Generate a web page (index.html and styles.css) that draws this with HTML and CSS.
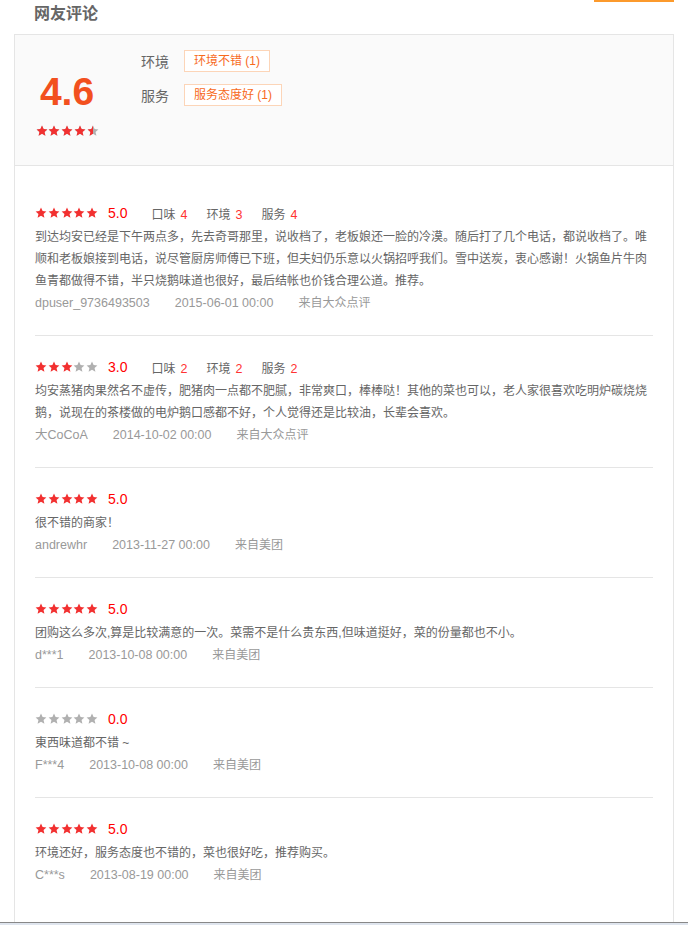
FILE: index.html
```html
<!DOCTYPE html>
<html lang="zh-CN">
<head>
<meta charset="utf-8">
<title>网友评论</title>
<link rel="stylesheet" href="styles.css">
</head>
<body>
<svg width="0" height="0" class="defs" aria-hidden="true">
  <defs>
    <path id="star" d="M12 1.2l3.2 7 7.6.8-5.7 5.1 1.7 7.5L12 17.7l-6.8 3.9 1.7-7.5L1.2 9l7.6-.8z"/>
  </defs>
</svg>
<div class="page">
  <div class="header">
    <h2 class="title">网友评论</h2>
    <div class="tab-line"></div>
  </div>
  <div class="box">
    <div class="summary">
      <div class="score-col">
        <div class="score">4.6</div>
        <div class="stars-wrap">
          <div class="stars gray">
            <svg viewBox="0 0 24 24"><use href="#star"/></svg><svg viewBox="0 0 24 24"><use href="#star"/></svg><svg viewBox="0 0 24 24"><use href="#star"/></svg><svg viewBox="0 0 24 24"><use href="#star"/></svg><svg viewBox="0 0 24 24"><use href="#star"/></svg>
          </div>
          <div class="stars red overlay" style="width:57px">
            <svg viewBox="0 0 24 24"><use href="#star"/></svg><svg viewBox="0 0 24 24"><use href="#star"/></svg><svg viewBox="0 0 24 24"><use href="#star"/></svg><svg viewBox="0 0 24 24"><use href="#star"/></svg><svg viewBox="0 0 24 24"><use href="#star"/></svg>
          </div>
        </div>
      </div>
      <div class="tags-col">
        <div class="tag-row"><span class="tag-label">环境</span><span class="tag">环境不错 (1)</span></div>
        <div class="tag-row"><span class="tag-label">服务</span><span class="tag">服务态度好 (1)</span></div>
      </div>
    </div>

    <div class="list">
      <div class="review">
        <div class="rhead">
          <div class="stars red"><svg viewBox="0 0 24 24"><use href="#star"/></svg><svg viewBox="0 0 24 24"><use href="#star"/></svg><svg viewBox="0 0 24 24"><use href="#star"/></svg><svg viewBox="0 0 24 24"><use href="#star"/></svg><svg viewBox="0 0 24 24"><use href="#star"/></svg></div>
          <span class="rscore">5.0</span>
          <span class="sub">口味<b>4</b></span><span class="sub">环境<b>3</b></span><span class="sub">服务<b>4</b></span>
        </div>
        <p class="rtext">到达均安已经是下午两点多，先去奇哥那里，说收档了，老板娘还一脸的冷漠。随后打了几个电话，都说收档了。唯顺和老板娘接到电话，说尽管厨房师傅已下班，但夫妇仍乐意以火锅招呼我们。雪中送炭，衷心感谢！火锅鱼片牛肉鱼青都做得不错，半只烧鹅味道也很好，最后结帐也价钱合理公道。推荐。</p>
        <div class="meta"><span class="user">dpuser_9736493503</span><span class="date">2015-06-01 00:00</span><span class="src">来自大众点评</span></div>
      </div>

      <div class="review">
        <div class="rhead">
          <div class="stars"><svg class="on" viewBox="0 0 24 24"><use href="#star"/></svg><svg class="on" viewBox="0 0 24 24"><use href="#star"/></svg><svg class="on" viewBox="0 0 24 24"><use href="#star"/></svg><svg class="off" viewBox="0 0 24 24"><use href="#star"/></svg><svg class="off" viewBox="0 0 24 24"><use href="#star"/></svg></div>
          <span class="rscore">3.0</span>
          <span class="sub">口味<b>2</b></span><span class="sub">环境<b>2</b></span><span class="sub">服务<b>2</b></span>
        </div>
        <p class="rtext">均安蒸猪肉果然名不虚传，肥猪肉一点都不肥腻，非常爽口，棒棒哒！其他的菜也可以，老人家很喜欢吃明炉碳烧烧鹅，说现在的茶楼做的电炉鹅口感都不好，个人觉得还是比较油，长辈会喜欢。</p>
        <div class="meta"><span class="user">大CoCoA</span><span class="date">2014-10-02 00:00</span><span class="src">来自大众点评</span></div>
      </div>

      <div class="review">
        <div class="rhead">
          <div class="stars red"><svg viewBox="0 0 24 24"><use href="#star"/></svg><svg viewBox="0 0 24 24"><use href="#star"/></svg><svg viewBox="0 0 24 24"><use href="#star"/></svg><svg viewBox="0 0 24 24"><use href="#star"/></svg><svg viewBox="0 0 24 24"><use href="#star"/></svg></div>
          <span class="rscore">5.0</span>
        </div>
        <p class="rtext">很不错的商家！</p>
        <div class="meta"><span class="user">andrewhr</span><span class="date">2013-11-27 00:00</span><span class="src">来自美团</span></div>
      </div>

      <div class="review">
        <div class="rhead">
          <div class="stars red"><svg viewBox="0 0 24 24"><use href="#star"/></svg><svg viewBox="0 0 24 24"><use href="#star"/></svg><svg viewBox="0 0 24 24"><use href="#star"/></svg><svg viewBox="0 0 24 24"><use href="#star"/></svg><svg viewBox="0 0 24 24"><use href="#star"/></svg></div>
          <span class="rscore">5.0</span>
        </div>
        <p class="rtext">团购这么多次,算是比较满意的一次。菜需不是什么贵东西,但味道挺好，菜的份量都也不小。</p>
        <div class="meta"><span class="user">d***1</span><span class="date">2013-10-08 00:00</span><span class="src">来自美团</span></div>
      </div>

      <div class="review">
        <div class="rhead">
          <div class="stars gray"><svg viewBox="0 0 24 24"><use href="#star"/></svg><svg viewBox="0 0 24 24"><use href="#star"/></svg><svg viewBox="0 0 24 24"><use href="#star"/></svg><svg viewBox="0 0 24 24"><use href="#star"/></svg><svg viewBox="0 0 24 24"><use href="#star"/></svg></div>
          <span class="rscore">0.0</span>
        </div>
        <p class="rtext">東西味道都不错 ~</p>
        <div class="meta"><span class="user">F***4</span><span class="date">2013-10-08 00:00</span><span class="src">来自美团</span></div>
      </div>

      <div class="review">
        <div class="rhead">
          <div class="stars red"><svg viewBox="0 0 24 24"><use href="#star"/></svg><svg viewBox="0 0 24 24"><use href="#star"/></svg><svg viewBox="0 0 24 24"><use href="#star"/></svg><svg viewBox="0 0 24 24"><use href="#star"/></svg><svg viewBox="0 0 24 24"><use href="#star"/></svg></div>
          <span class="rscore">5.0</span>
        </div>
        <p class="rtext">环境还好，服务态度也不错的，菜也很好吃，推荐购买。</p>
        <div class="meta"><span class="user">C***s</span><span class="date">2013-08-19 00:00</span><span class="src">来自美团</span></div>
      </div>
    </div>
  </div>
  <div class="bottom-bar"></div>
</div>
</body>
</html>
```

FILE: styles.css
```css
* { box-sizing: border-box; }
html, body {
  margin: 0;
  padding: 0;
  background: #fff;
  overflow: hidden;
}
body {
  font-family: "Liberation Sans", "Noto Sans CJK SC", sans-serif;
  font-size: 12px;
  color: #666;
}
.defs { position: absolute; width: 0; height: 0; }

.page { width: 688px; }

.header {
  height: 34px;
  display: flex;
  justify-content: space-between;
  align-items: flex-start;
}
.title {
  margin: 0;
  padding: 4px 0 0 34px;
  font-size: 16px;
  line-height: 20px;
  font-weight: bold;
  color: #666;
}
.tab-line {
  width: 80px;
  height: 2px;
  margin-right: 14px;
  background: #fc9a2c;
}

.box {
  margin: 0 14px;
  border: 1px solid #e5e5e5;
  border-bottom: none;
}

.summary {
  height: 131px;
  background: #fafafa;
  border-bottom: 1px solid #e5e5e5;
  display: flex;
  padding-left: 20px;
}
.score-col {
  width: 64px;
  display: flex;
  flex-direction: column;
  align-items: center;
}
.score {
  margin-top: 37px;
  font-size: 39px;
  line-height: 39px;
  font-weight: bold;
  color: #f2501e;
  font-family: "Liberation Sans", Arial, sans-serif;
}
.stars-wrap {
  margin-top: 14px;
  position: relative;
  width: 63px;
  height: 12px;
}
.overlay {
  position: absolute;
  left: 0;
  top: 0;
  overflow: hidden;
}

.stars {
  display: flex;
  gap: 0.75px;
  width: 63px;
  height: 12px;
  flex-shrink: 0;
}
.stars svg {
  width: 12px;
  height: 12px;
  flex-shrink: 0;
  display: block;
}
.stars.red svg, .stars svg.on { fill: #f23030; }
.stars.gray svg, .stars svg.off { fill: #b0b0b0; }

.tags-col {
  margin-left: 42px;
  padding-top: 15px;
  display: flex;
  flex-direction: column;
  gap: 12px;
}
.tag-row {
  display: flex;
  align-items: center;
  height: 22px;
}
.tag-label {
  font-size: 14px;
  color: #666;
  width: 43px;
}
.tag {
  height: 22px;
  line-height: 20px;
  padding: 0 9px;
  border: 1px solid #fcd5b8;
  background: #fff;
  color: #f76a1c;
  font-size: 12px;
}

.list {
  padding: 16px 20px 15px;
}
.review {
  padding: 20px 0 21px;
  border-bottom: 1px solid #e5e5e5;
}
.review:last-child { border-bottom: none; }

.rhead {
  height: 22px;
  display: flex;
  align-items: center;
}
.rscore {
  margin-left: 10px;
  font-size: 14px;
  color: #f00;
  font-family: "Liberation Sans", Arial, sans-serif;
}
.rscore + .sub { margin-left: 24px; }
.sub {
  margin-left: 19px;
  font-size: 12px;
  color: #666;
}
.sub b {
  font-weight: normal;
  color: #f33;
  margin-left: 5px;
  font-size: 12.5px;
}

.rtext {
  margin: 2px 0 0;
  line-height: 22px;
  font-size: 12px;
  color: #666;
}
.meta {
  height: 22px;
  line-height: 22px;
  color: #999;
  font-size: 12.5px;
  display: flex;
  align-items: baseline;
  gap: 25px;
}
.meta .user, .meta .date { font-size: 12.5px; }
.meta .src { font-size: 12px; }

.bottom-bar {
  height: 4px;
  border-top: 1px solid #888;
  background: #dfe5ee;
}
```
